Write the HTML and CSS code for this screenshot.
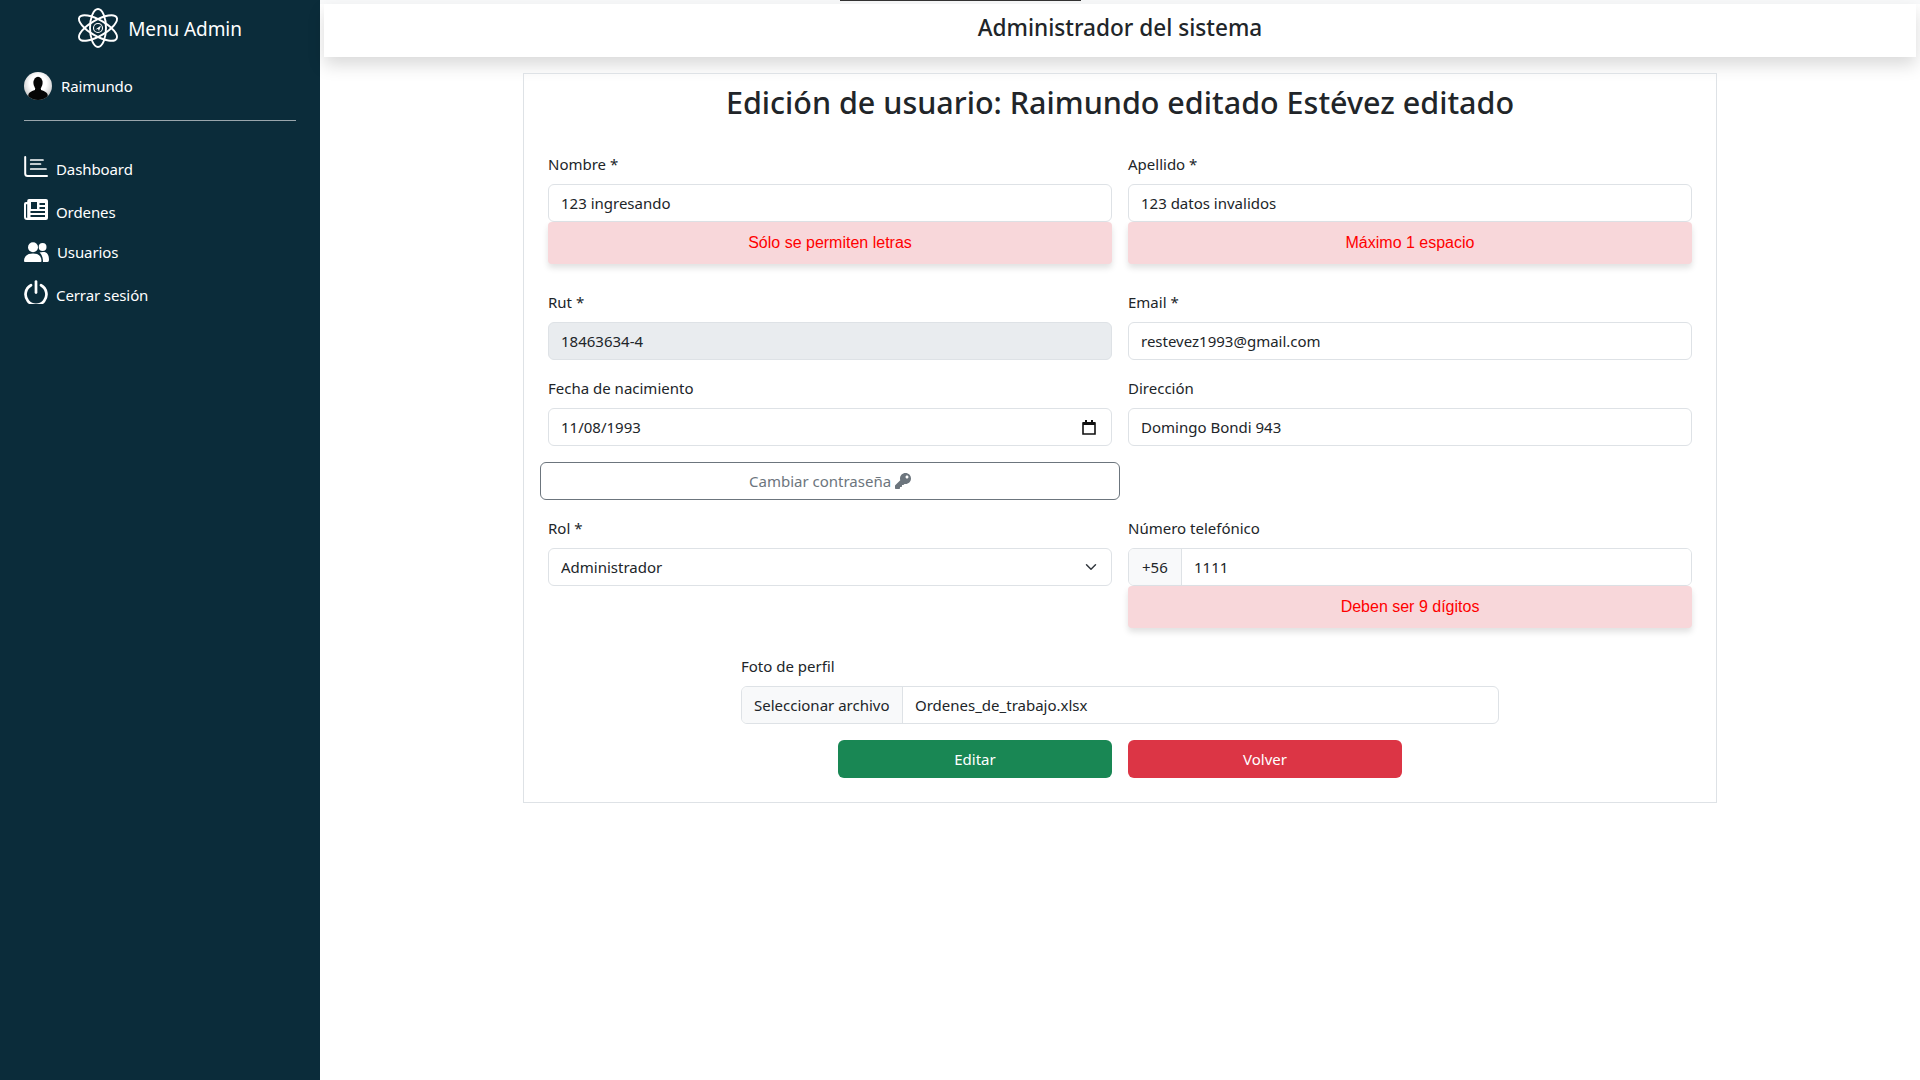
FILE: index.html
```html
<!DOCTYPE html>
<html lang="es">
<head>
    <meta charset="utf-8">
    <title>Edición de usuario</title>
    <link rel="stylesheet" href="styles.css">
</head>
<body>
    <aside class="sidebar">
        <div class="brand">
            <svg class="brand-logo" viewBox="0 0 40 40" fill="none" stroke="#fff" stroke-width="1.9">
                <ellipse cx="20" cy="20" rx="8" ry="19"/>
                <ellipse cx="20" cy="20" rx="21.5" ry="8" transform="rotate(30 20 20)"/>
                <ellipse cx="20" cy="20" rx="21.5" ry="8" transform="rotate(-30 20 20)"/>
                <circle cx="20" cy="20" r="4.5" stroke-width="1.1"/>
                <path d="M17.5 21.5 L23 17.5 L21 23 L20 21 Z" fill="#fff" stroke="none"/>
            </svg>
            <span>Menu Admin</span>
        </div>
        <div class="user">
            <svg class="avatar" viewBox="0 0 28 28">
                <defs>
                    <radialGradient id="avatarBg" cx="50%" cy="40%" r="60%">
                        <stop offset="0.5" stop-color="#fff"/>
                        <stop offset="1" stop-color="#c4c4c4"/>
                    </radialGradient>
                    <clipPath id="avatarClip"><circle cx="14" cy="14" r="14"/></clipPath>
                </defs>
                <circle cx="14" cy="14" r="14" fill="url(#avatarBg)"/>
                <g clip-path="url(#avatarClip)" fill="#050505">
                    <ellipse cx="14" cy="11" rx="4.6" ry="6.2"/>
                    <path d="M11.5 15 h5 l.6 3 c3 1 5.5 2 6.4 4 l1 7 H3.5 l1-7 c.9-2 3.4-3 6.4-4z"/>
                </g>
            </svg>
            <span>Raimundo</span>
        </div>
        <hr class="divider">
        <nav class="menu">
            <a class="menu-item item-dashboard" href="#">
                <svg class="menu-icon" viewBox="0 0 24 22" fill="none" stroke="#fff" stroke-width="2" stroke-linecap="round">
                    <path d="M1.2 1 V17.5 Q1.2 20 3.7 20 H23"/>
                    <path d="M6.7 4 H19 M6.7 8 H16.5 M6.7 13 H22" stroke-width="1.7"/>
                </svg>
                <span>Dashboard</span>
            </a>
            <a class="menu-item item-orders" href="#">
                <svg class="menu-icon" viewBox="0 0 24 22">
                    <path fill="#fff" fill-rule="evenodd" d="M5 0 H22 Q24 0 24 2 V19 Q24 21 22 21 H3 Q0 21 0 18 V5 Q0 3 2 3 H3.2 V2 Q3.2 0 5 0Z M3.2 5.2 H2 V18 Q2 19 3.2 19Z M7 3 V10 H13 V3Z M15.5 4 V6 H21 V4Z M15.5 8 V10 H21 V8Z M6.5 12 V14 H21 V12Z M6.5 16 V18 H21 V16Z"/>
                </svg>
                <span>Ordenes</span>
            </a>
            <a class="menu-item item-users" href="#">
                <svg class="menu-icon" viewBox="0 0 25 20" fill="#fff">
                    <circle cx="9" cy="5.2" r="5"/>
                    <circle cx="18.6" cy="5" r="3.9"/>
                    <path d="M0 19 C0 14 3.5 11.5 9 11.5 C14.5 11.5 17.5 14 17.5 19 Q17.5 20 16.5 20 H1 Q0 20 0 19Z"/>
                    <path d="M15.5 10.6 C17 9.8 19 9.8 20.5 10 C23.5 10.5 25 13.5 25 18 Q25 20 23.5 20 H19 C19 16 18 12.5 15.5 10.6Z"/>
                </svg>
                <span>Usuarios</span>
            </a>
            <a class="menu-item item-logout" href="#">
                <svg class="menu-icon" viewBox="1 0 22 23" fill="none" stroke="#fff" stroke-width="2.6" stroke-linecap="round">
                    <path d="M7.2 5 A10 10 0 1 0 16.8 5"/>
                    <path d="M12 1.5 V12"/>
                </svg>
                <span>Cerrar sesión</span>
            </a>
        </nav>
    </aside>

    <main class="content">
        <div class="top-strip"><div class="top-line"></div></div>
        <header class="topbar">Administrador del sistema</header>

        <form class="card" action="#" method="post">
            <h2 class="card-title">Edición de usuario: Raimundo editado Estévez editado</h2>

            <div class="form-row row-errors">
                <div class="field">
                    <label for="nombre">Nombre *</label>
                    <input type="text" id="nombre" value="123 ingresando">
                    <div class="error">Sólo se permiten letras</div>
                </div>
                <div class="field">
                    <label for="apellido">Apellido *</label>
                    <input type="text" id="apellido" value="123 datos invalidos">
                    <div class="error">Máximo 1 espacio</div>
                </div>
            </div>

            <div class="form-row">
                <div class="field">
                    <label for="rut">Rut *</label>
                    <input type="text" id="rut" value="18463634-4" disabled>
                </div>
                <div class="field">
                    <label for="email">Email *</label>
                    <input type="text" id="email" value="restevez1993@gmail.com">
                </div>
            </div>

            <div class="form-row">
                <div class="field">
                    <label for="fecha">Fecha de nacimiento</label>
                    <input type="text" id="fecha" class="date-input" value="11/08/1993">
                </div>
                <div class="field">
                    <label for="direccion">Dirección</label>
                    <input type="text" id="direccion" value="Domingo Bondi 943">
                </div>
            </div>

            <div class="form-row">
                <button type="button" class="btn-password">
                    Cambiar contraseña
                    <svg class="key-icon" viewBox="0 0 512 512"><path fill="#6c757d" d="M512 176.001C512 273.203 433.202 352 336 352c-11.22 0-22.19-1.062-32.827-3.069l-24.012 27.014A23.999 23.999 0 0 1 261.223 384H224v40c0 13.255-10.745 24-24 24h-40v40c0 13.255-10.745 24-24 24H24c-13.255 0-24-10.745-24-24v-78.059c0-6.365 2.529-12.47 7.029-16.971l161.802-161.802C163.108 213.814 160 195.271 160 176 160 78.798 238.797.001 335.999 0 433.488-.001 512 78.511 512 176.001zM336 128c0 26.51 21.49 48 48 48s48-21.49 48-48-21.49-48-48-48-48 21.49-48 48z"/></svg>
                </button>
            </div>

            <div class="form-row row-errors">
                <div class="field">
                    <label for="rol">Rol *</label>
                    <select id="rol">
                        <option>Administrador</option>
                    </select>
                </div>
                <div class="field">
                    <label for="telefono">Número telefónico</label>
                    <div class="phone-group">
                        <span class="phone-prefix">+56</span>
                        <input type="text" id="telefono" value="1111">
                    </div>
                    <div class="error">Deben ser 9 dígitos</div>
                </div>
            </div>

            <div class="photo-field">
                <label>Foto de perfil</label>
                <div class="file-group">
                    <span class="file-button">Seleccionar archivo</span>
                    <span class="file-name">Ordenes_de_trabajo.xlsx</span>
                </div>
            </div>

            <div class="actions">
                <button type="submit" class="btn btn-edit">Editar</button>
                <button type="button" class="btn btn-back">Volver</button>
            </div>
        </form>
    </main>
</body>
</html>
```

FILE: styles.css
```css
* {
    box-sizing: border-box;
}

body {
    margin: 0;
    height: 100vh;
    display: flex;
    overflow: hidden;
    background-color: #fff;
    color: #212529;
    font-family: "Noto Sans", "Open Sans", sans-serif;
    font-size: 15px;
}

/* sidebar */
.sidebar {
    width: 320px;
    flex-shrink: 0;
    padding: 8px 24px 0;
    background-color: #0b2c3a;
    color: #fff;
    letter-spacing: -0.1px;
}

.brand {
    display: flex;
    align-items: center;
    justify-content: center;
    gap: 10px;
    height: 40px;
    font-size: 19px;
}

.brand span {
    padding-top: 2px;
}

.brand-logo {
    width: 40px;
    height: 40px;
    overflow: visible;
}

.user {
    display: flex;
    align-items: center;
    gap: 9px;
    margin-top: 24px;
    height: 28px;
}

.avatar {
    width: 28px;
    height: 28px;
}

.divider {
    margin: 20px 0 0;
    border: 0;
    border-top: 1px solid #9aa6ac;
}

.menu {
    display: flex;
    flex-direction: column;
    margin-top: 34px;
}

.menu-item {
    display: flex;
    align-items: center;
    gap: 8px;
    color: #fff;
    text-decoration: none;
}

.menu-icon {
    width: 24px;
    height: 22px;
    flex-shrink: 0;
}

.item-dashboard {
    height: 24px;
}

.item-dashboard span {
    padding-top: 4px;
}

.item-orders {
    height: 24px;
    margin-top: 19px;
}

.item-orders span {
    padding-top: 3px;
}

.item-users {
    height: 22px;
    margin-top: 19px;
}

.item-users .menu-icon {
    width: 25px;
    height: 20px;
}

.item-logout {
    height: 24px;
    margin-top: 17px;
}

.item-logout span {
    padding-top: 6px;
}

.item-logout .menu-icon {
    height: 24px;
}

/* main */
.content {
    flex: 1;
    min-width: 0;
}

.top-strip {
    height: 4px;
    background-color: #f8f9fa;
}

.top-line {
    width: 241px;
    height: 1px;
    margin-left: 520px;
    background-color: #333;
}

.topbar {
    display: flex;
    align-items: center;
    justify-content: center;
    height: 53px;
    margin: 0 4px;
    padding-bottom: 6px;
    background-color: #fff;
    box-shadow: 0 8px 16px rgba(0, 0, 0, 0.15);
    font-size: 22.6px;
    font-weight: 500;
}

.card {
    width: 1194px;
    height: 730px;
    margin: 16px auto 0;
    padding: 9px 24px 0;
    border: 1px solid #dee2e6;
}

.card-title {
    margin: 0 0 31px;
    font-size: 30.5px;
    font-weight: 500;
    line-height: 38px;
    text-align: center;
}

.form-row {
    display: grid;
    grid-template-columns: 564px 564px;
    column-gap: 16px;
    margin-bottom: 16px;
}

.row-errors {
    margin-bottom: 26px;
}

label {
    display: block;
    height: 24px;
    margin-bottom: 8px;
    line-height: 24px;
}

input, select {
    display: block;
    width: 100%;
    height: 38px;
    padding: 6px 12px;
    border: 1px solid #dee2e6;
    border-radius: 6px;
    background-color: #fff;
    color: #212529;
    font: inherit;
}

input:disabled {
    background-color: #e9ecef;
}

.date-input {
    background-image: url("data:image/svg+xml,%3csvg xmlns='http://www.w3.org/2000/svg' viewBox='0 0 14 15'%3e%3cpath fill='none' stroke='%23111' stroke-width='1.6' d='M1 3h12v11H1z'/%3e%3cpath fill='%23111' d='M1 2h12v3H1zM3 0h2v3H3zM9 0h2v3H9z'/%3e%3c/svg%3e");
    background-repeat: no-repeat;
    background-position: right 15px center;
    background-size: 14px 15px;
}

select {
    appearance: none;
    background-image: url("data:image/svg+xml,%3csvg xmlns='http://www.w3.org/2000/svg' viewBox='0 0 16 16'%3e%3cpath fill='none' stroke='%23343a40' stroke-linecap='round' stroke-linejoin='round' stroke-width='2' d='m2 5 6 6 6-6'/%3e%3c/svg%3e");
    background-repeat: no-repeat;
    background-position: right 12px center;
    background-size: 16px 12px;
}

.error {
    display: flex;
    align-items: center;
    justify-content: center;
    height: 42px;
    border-radius: 4px;
    background-color: #f8d7da;
    box-shadow: 0 4px 6px rgba(0, 0, 0, 0.12);
    color: #f00;
    font-family: "Liberation Sans", Arial, sans-serif;
    font-size: 16px;
    position: relative;
}

.btn-password {
    width: 580px;
    height: 38px;
    margin-left: -8px;
    border: 1px solid #6c757d;
    border-radius: 6px;
    background: #fff;
    color: #6c757d;
    font: inherit;
}

.key-icon {
    width: 16px;
    height: 16px;
    vertical-align: -2px;
}

.phone-group, .file-group {
    display: flex;
    height: 38px;
    border: 1px solid #dee2e6;
    border-radius: 6px;
    overflow: hidden;
}

.phone-prefix {
    display: flex;
    align-items: center;
    width: 53px;
    padding-left: 13px;
    border-right: 1px solid #dee2e6;
    background-color: #f8f9fa;
}

.phone-group input {
    height: 36px;
    flex: 1;
    border: 0;
    border-radius: 0;
}

.photo-field {
    width: 758px;
    margin: 0 auto 16px;
}

.file-button {
    display: flex;
    align-items: center;
    padding: 0 12px;
    width: 161px;
    border-right: 1px solid #dee2e6;
    background-color: #f8f9fa;
    white-space: nowrap;
}

.file-name {
    display: flex;
    align-items: center;
    padding-left: 12px;
}

.actions {
    display: flex;
    justify-content: center;
    gap: 16px;
}

.btn {
    width: 274px;
    height: 38px;
    border: 0;
    border-radius: 6px;
    color: #fff;
    font: inherit;
}

.btn-edit {
    background-color: #198754;
}

.btn-back {
    background-color: #dc3545;
}
```
